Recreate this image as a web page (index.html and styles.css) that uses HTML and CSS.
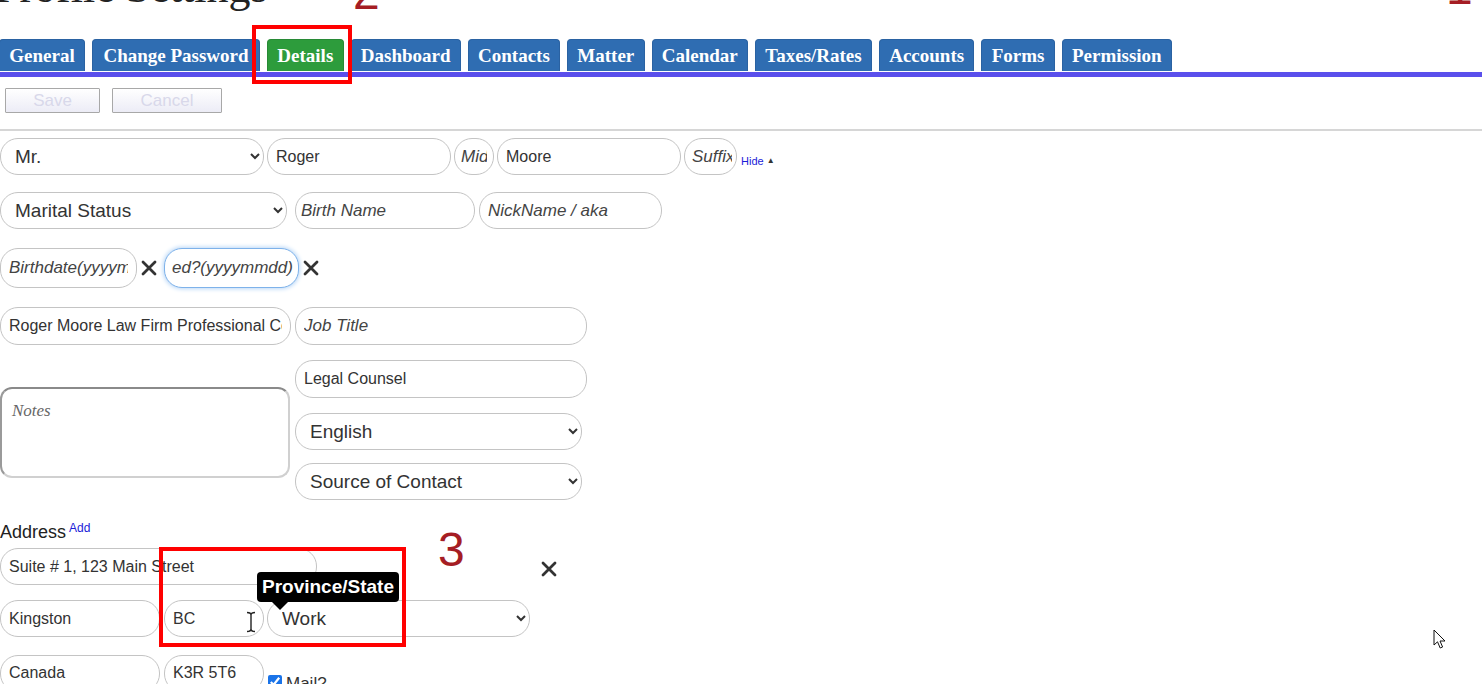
FILE: index.html
```html
<!DOCTYPE html>
<html lang="en">
<head>
  <meta charset="UTF-8" />
  <title>Profile Settings</title>
  <link rel="stylesheet" href="styles.css">
</head>
<body>
  <div class="page">
    <h1 class="page-title">Profile Settings</h1>

    <div class="tabs">
      <a class="tab">General</a>
      <a class="tab tab-wide">Change Password</a>
      <a class="tab active">Details</a>
      <a class="tab">Dashboard</a>
      <a class="tab">Contacts</a>
      <a class="tab">Matter</a>
      <a class="tab">Calendar</a>
      <a class="tab">Taxes/Rates</a>
      <a class="tab">Accounts</a>
      <a class="tab">Forms</a>
      <a class="tab">Permission</a>
    </div>
    <div class="tab-line"></div>

    <div class="toolbar">
      <button class="btn btn-save" disabled>Save</button>
      <button class="btn btn-cancel" disabled>Cancel</button>
    </div>
    <div class="divider"></div>

    <div class="form">
      <div class="row row-name">
        <select class="field w-title"><option>Mr.</option></select>
        <input class="field w-first" type="text" value="Roger" />
        <input class="field w-middle" type="text" placeholder="Middle" />
        <input class="field w-last" type="text" value="Moore" />
        <input class="field w-suffix" type="text" placeholder="Suffix" />
        <a class="hide-link">Hide <span class="caret">&#9650;</span></a>
      </div>

      <div class="row row-extra">
        <select class="field w-marital"><option>Marital Status</option></select>
        <input class="field w-birthname" type="text" placeholder="Birth Name" />
        <input class="field w-nick" type="text" placeholder="NickName / aka" />
      </div>

      <div class="row row-dates">
        <input class="field w-date" type="text" placeholder="Birthdate(yyyymmdd)" />
        <span class="clear-x"><svg width="20" height="20" viewBox="0 0 20 20"><path d="M4 4 L16 16 M16 4 L4 16" stroke="#333" stroke-width="2.8" stroke-linecap="round"/></svg></span>
        <input class="field w-date2 focused" type="text" placeholder="ed?(yyyymmdd)" />
        <span class="clear-x"><svg width="20" height="20" viewBox="0 0 20 20"><path d="M4 4 L16 16 M16 4 L4 16" stroke="#333" stroke-width="2.8" stroke-linecap="round"/></svg></span>
      </div>

      <div class="row row-work">
        <input class="field w-company" type="text" value="Roger Moore Law Firm Professional Corporation" />
        <input class="field w-job" type="text" placeholder="Job Title" />
      </div>

      <div class="split">
        <div class="split-left">
          <textarea class="notes" placeholder="Notes"></textarea>
        </div>
        <div class="split-right">
          <input class="field w-right" type="text" value="Legal Counsel" />
          <select class="field w-right-sel sel-lang"><option>English</option></select>
          <select class="field w-right-sel sel-source"><option>Source of Contact</option></select>
        </div>
      </div>

      <div class="section-label">Address<a class="add-link">Add</a></div>

      <div class="row row-addr1">
        <input class="field w-street" type="text" value="Suite # 1, 123 Main Street" />
        <span class="clear-x addr-x"><svg width="20" height="20" viewBox="0 0 20 20"><path d="M4 4 L16 16 M16 4 L4 16" stroke="#333" stroke-width="2.8" stroke-linecap="round"/></svg></span>
      </div>

      <div class="row row-addr2">
        <input class="field w-city" type="text" value="Kingston" />
        <input class="field w-prov" type="text" value="BC" />
        <select class="field w-type"><option>Work</option></select>
      </div>

      <div class="row row-addr3">
        <input class="field w-city" type="text" value="Canada" />
        <input class="field w-prov" type="text" value="K3R 5T6" />
        <label class="mail"><input type="checkbox" checked /> Mail?</label>
      </div>
    </div>

    <!-- annotations over the screenshot -->
    <div class="mark-box box-details"></div>
    <div class="mark-box box-province"></div>
    <div class="mark-num num-1">1</div>
    <div class="mark-num num-2">2</div>
    <div class="mark-num num-3">3</div>

    <div class="tooltip">Province/State</div>

    <svg class="ibeam" width="12" height="22" viewBox="0 0 12 22">
      <path d="M2 1.5 Q6 1.5 6 4 Q6 1.5 10 1.5 M6 4 V18 M2 20.5 Q6 20.5 6 18 Q6 20.5 10 20.5" fill="none" stroke="#fff" stroke-width="3.2"/>
      <path d="M2 1.5 Q6 1.5 6 4 Q6 1.5 10 1.5 M6 4 V18 M2 20.5 Q6 20.5 6 18 Q6 20.5 10 20.5" fill="none" stroke="#222" stroke-width="1.4"/>
    </svg>

    <svg class="pointer" width="14" height="22" viewBox="0 0 14 22">
      <path d="M1 1 L1 16 L4.5 12.8 L7.2 19 L9.6 18 L7 12 L12 12 Z" fill="#fff" stroke="#111" stroke-width="1" stroke-linejoin="round"/>
    </svg>
  </div>
</body>
</html>
```

FILE: styles.css
```css
* {
  box-sizing: border-box;
}

body {
  margin: 0;
  font-family: 'Liberation Sans', Arial, Helvetica, sans-serif;
  color: #333;
  background: #fff;
}

.page {
  position: relative;
  display: flow-root;
  width: 1482px;
  height: 684px;
  overflow: hidden;
}

.page-title {
  margin: -34px 0 29px -5px;
  height: 44px;
  font-family: 'Liberation Serif', 'Times New Roman', serif;
  font-weight: normal;
  font-size: 44px;
  line-height: 44px;
  color: #222;
}

/* tabs */
.tabs {
  display: flex;
  gap: 7px;
  margin-left: -1px;
}

.tab {
  height: 32px;
  padding: 0 9.25px;
  font-family: 'Liberation Serif', 'Times New Roman', serif;
  font-weight: bold;
  font-size: 19px;
  line-height: 31px;
  color: #fff;
  background: #2f6db2;
  border: 1px solid #2a62a2;
  border-bottom: none;
  border-radius: 4px 4px 0 0;
  white-space: nowrap;
}

.tab-wide {
  padding: 0 10.5px;
}

.tab.active {
  background: #2d9c3c;
  border-color: #288a36;
}

.tab-line {
  height: 5px;
  margin-top: 1px;
  background: #5a4fec;
}

/* toolbar */
.toolbar {
  display: flex;
  gap: 12px;
  margin: 11px 0 0 5px;
}

.btn {
  height: 25px;
  font-family: 'Liberation Sans', Arial, sans-serif;
  font-size: 17px;
  color: #d8d8ea;
  background: linear-gradient(#ffffff, #ececf6);
  border: 1px solid #a8a8a8;
  border-radius: 1px;
  padding: 0;
}

.btn-save {
  width: 95px;
}

.btn-cancel {
  width: 110px;
}

.divider {
  height: 2px;
  margin-top: 16px;
  background: #d6d6d6;
}

/* form fields */
.row {
  display: flex;
  align-items: center;
}

.field {
  height: 37px;
  padding: 0 8px;
  font-family: 'Liberation Sans', Arial, sans-serif;
  font-size: 16px;
  color: #333;
  background: #fff;
  border: 1px solid #c4c4c4;
  border-radius: 18px;
  outline: none;
}

.field::placeholder {
  font-size: 17px;
  font-style: italic;
  color: #444;
}

select.field {
  font-size: 19px;
  padding: 0 6px 0 10px;
}

.field.focused {
  border: 1.5px solid #7eb2ea;
  box-shadow: 0 0 4px 1px #b9d7f7;
}

.row-name {
  margin-top: 7px;
  gap: 3px;
}

.w-title { width: 264px; }
.w-first { width: 184px; }
.w-middle { width: 40px; padding: 0 6px; }
.w-last { width: 184px; }
.w-suffix { width: 53px; padding: 0 4px 0 7px; }

.hide-link {
  align-self: flex-end;
  margin: 0 0 8px 1px;
  font-size: 11px;
  color: #1b1bd8;
}

.caret {
  font-size: 8px;
  color: #333;
  vertical-align: 2px;
}

.row-extra {
  margin-top: 17px;
}

.w-marital { width: 287px; margin-right: 8px; }
.w-birthname { width: 180px; margin-right: 4px; padding-left: 5px; }
.w-nick { width: 183px; }

.row-dates {
  margin-top: 19px;
}

.w-date,
.w-date2 {
  height: 40px;
}

.w-date { width: 137px; }
.w-date2 { width: 135px; margin-left: 5px; padding: 0 2px 0 7px; }

.clear-x {
  display: flex;
  width: 20px;
  height: 20px;
  margin-left: 2px;
}

.row-work {
  margin-top: 19px;
  gap: 4px;
}

.w-company { width: 291px; height: 38px; }
.w-job { width: 292px; height: 38px; }

.split {
  display: flex;
  gap: 5px;
  margin-top: 15px;
}

.split-left {
  padding-top: 27px;
}

.notes {
  display: block;
  width: 290px;
  height: 91px;
  padding: 12px 10px;
  font-family: 'Liberation Serif', 'Times New Roman', serif;
  font-size: 17px;
  background: #fff;
  border: 2px solid #d0d0d0;
  border-top-color: #8a8a8a;
  border-left-color: #9a9a9a;
  border-radius: 12px;
  resize: none;
  outline: none;
}

.notes::placeholder {
  font-style: italic;
  color: #666;
}

.split-right {
  display: flex;
  flex-direction: column;
}

.w-right { width: 292px; height: 38px; }

.w-right-sel {
  width: 287px;
}

.sel-lang { margin-top: 15px; }
.sel-source { margin-top: 13px; }

.section-label {
  margin-top: 18px;
  font-size: 18px;
  line-height: 20px;
  color: #222;
}

.add-link {
  font-size: 12px;
  color: #1b1bd8;
  vertical-align: 6px;
  margin-left: 3px;
}

.row-addr1 {
  margin-top: 6px;
}

.w-street { width: 317px; }

.addr-x {
  margin: 4px 0 0 222px;
}

.row-addr2 {
  margin-top: 15px;
  gap: 4px;
}

.w-city { width: 160px; }
.w-prov { width: 100px; }
.w-type { width: 263px; margin-left: -1px; }

.row-addr3 {
  margin-top: 17px;
  gap: 4px;
}

.mail {
  display: flex;
  align-items: flex-start;
  align-self: flex-start;
  margin-top: 21px;
  font-size: 17px;
  line-height: 17px;
  color: #333;
}

.mail input {
  width: 14px;
  height: 14px;
  margin: 0 4px 0 0;
  accent-color: #1a73e8;
}

/* annotations */
.mark-box {
  position: absolute;
  border: 4px solid #ff0000;
}

.box-details {
  left: 252px;
  top: 25px;
  width: 100px;
  height: 59px;
}

.box-province {
  left: 159px;
  top: 547px;
  width: 247px;
  height: 100px;
}

.mark-num {
  position: absolute;
  font-family: 'Liberation Sans', Arial, sans-serif;
  font-size: 48px;
  line-height: 48px;
  color: #a51d24;
}

.num-1 { left: 1446px; top: -36px; }
.num-2 { left: 353px; top: -31px; }
.num-3 { left: 438px; top: 526px; }

.tooltip {
  position: absolute;
  left: 257px;
  top: 572px;
  height: 30px;
  padding: 0 5px;
  font-size: 19px;
  font-weight: bold;
  line-height: 30px;
  color: #fff;
  background: #000;
  border-radius: 4px;
}

.tooltip::after {
  content: "";
  position: absolute;
  left: 14px;
  bottom: -8px;
  border-left: 9px solid transparent;
  border-right: 9px solid transparent;
  border-top: 9px solid #000;
}

.ibeam {
  position: absolute;
  left: 245px;
  top: 611px;
}

.pointer {
  position: absolute;
  left: 1433px;
  top: 629px;
}
```
